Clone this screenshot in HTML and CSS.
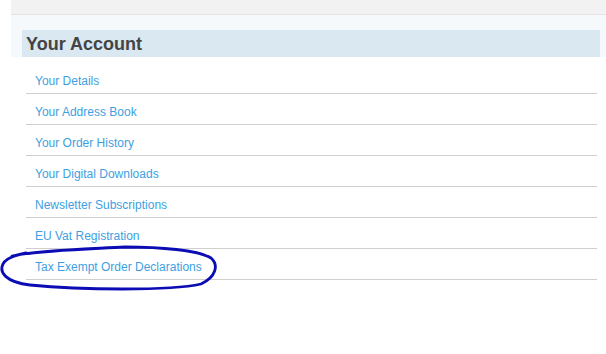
FILE: index.html
```html
<!DOCTYPE html>
<html lang="en">
<head>
    <meta charset="UTF-8">
    <title>Your Account</title>
    <link rel="stylesheet" href="styles.css">
</head>
<body>
    <div class="topbar"></div>

    <div class="account">
        <div class="account-head">
            <h2>Your Account</h2>
        </div>

        <ul class="account-links">
            <li><a href="#">Your Details</a></li>
            <li><a href="#">Your Address Book</a></li>
            <li><a href="#">Your Order History</a></li>
            <li><a href="#">Your Digital Downloads</a></li>
            <li><a href="#">Newsletter Subscriptions</a></li>
            <li><a href="#">EU Vat Registration</a></li>
            <li><a href="#">Tax Exempt Order Declarations</a></li>
        </ul>

        <!-- hand drawn circle round the last link -->
        <svg class="scribble" width="220" height="50" viewBox="0 0 220 50">
            <path d="M12 12 C40 6, 90 5, 125 3 C160 3, 198 6, 211 14 C219 21, 216 33, 201 40 C170 47, 80 46, 30 41 C5 38, -1 28, 3 20 C6 14, 15 11, 26 9"
                  fill="none" stroke="#0c0cb4" stroke-width="2.8" stroke-linecap="round"/>
        </svg>
    </div>
</body>
</html>
```

FILE: styles.css
```css
html, body {
    height: 100%;
}

body {
    margin: 0;
    font-family: "Liberation Sans", Arial, sans-serif;
    background: #fff;
}

.topbar {
    margin-left: 11px;
    height: 14px;
    background-color: #f2f2f2;
    border-bottom: 1px solid #e4e4e4;
}

.account {
    position: relative;
    padding-bottom: 60px;
}

.account-head {
    margin-left: 11px;
    padding: 15px 6px 0 11px;
    background-color: #f5f9fc;
}

.account-head h2 {
    margin: 0;
    height: 27px;
    padding-left: 4px;
    font-size: 18px;
    line-height: 28px;
    color: #444;
    background-color: #d9e8f1;
}

.account-links {
    list-style: none;
    margin: 6px 0 0 26px;
    padding: 0;
    width: 571px;
}

.account-links li {
    height: 30px;
    border-bottom: 1px solid #cfcfcf;
}

.account-links a {
    display: block;
    padding-left: 9px;
    font-size: 12px;
    line-height: 36px;
    height: 30px;
    overflow: hidden;
    color: #3d9fe2;
    text-decoration: none;
}

.scribble {
    display: block;
    overflow: visible;
    position: absolute;
    left: 0;
    top: 229px;
}
```
